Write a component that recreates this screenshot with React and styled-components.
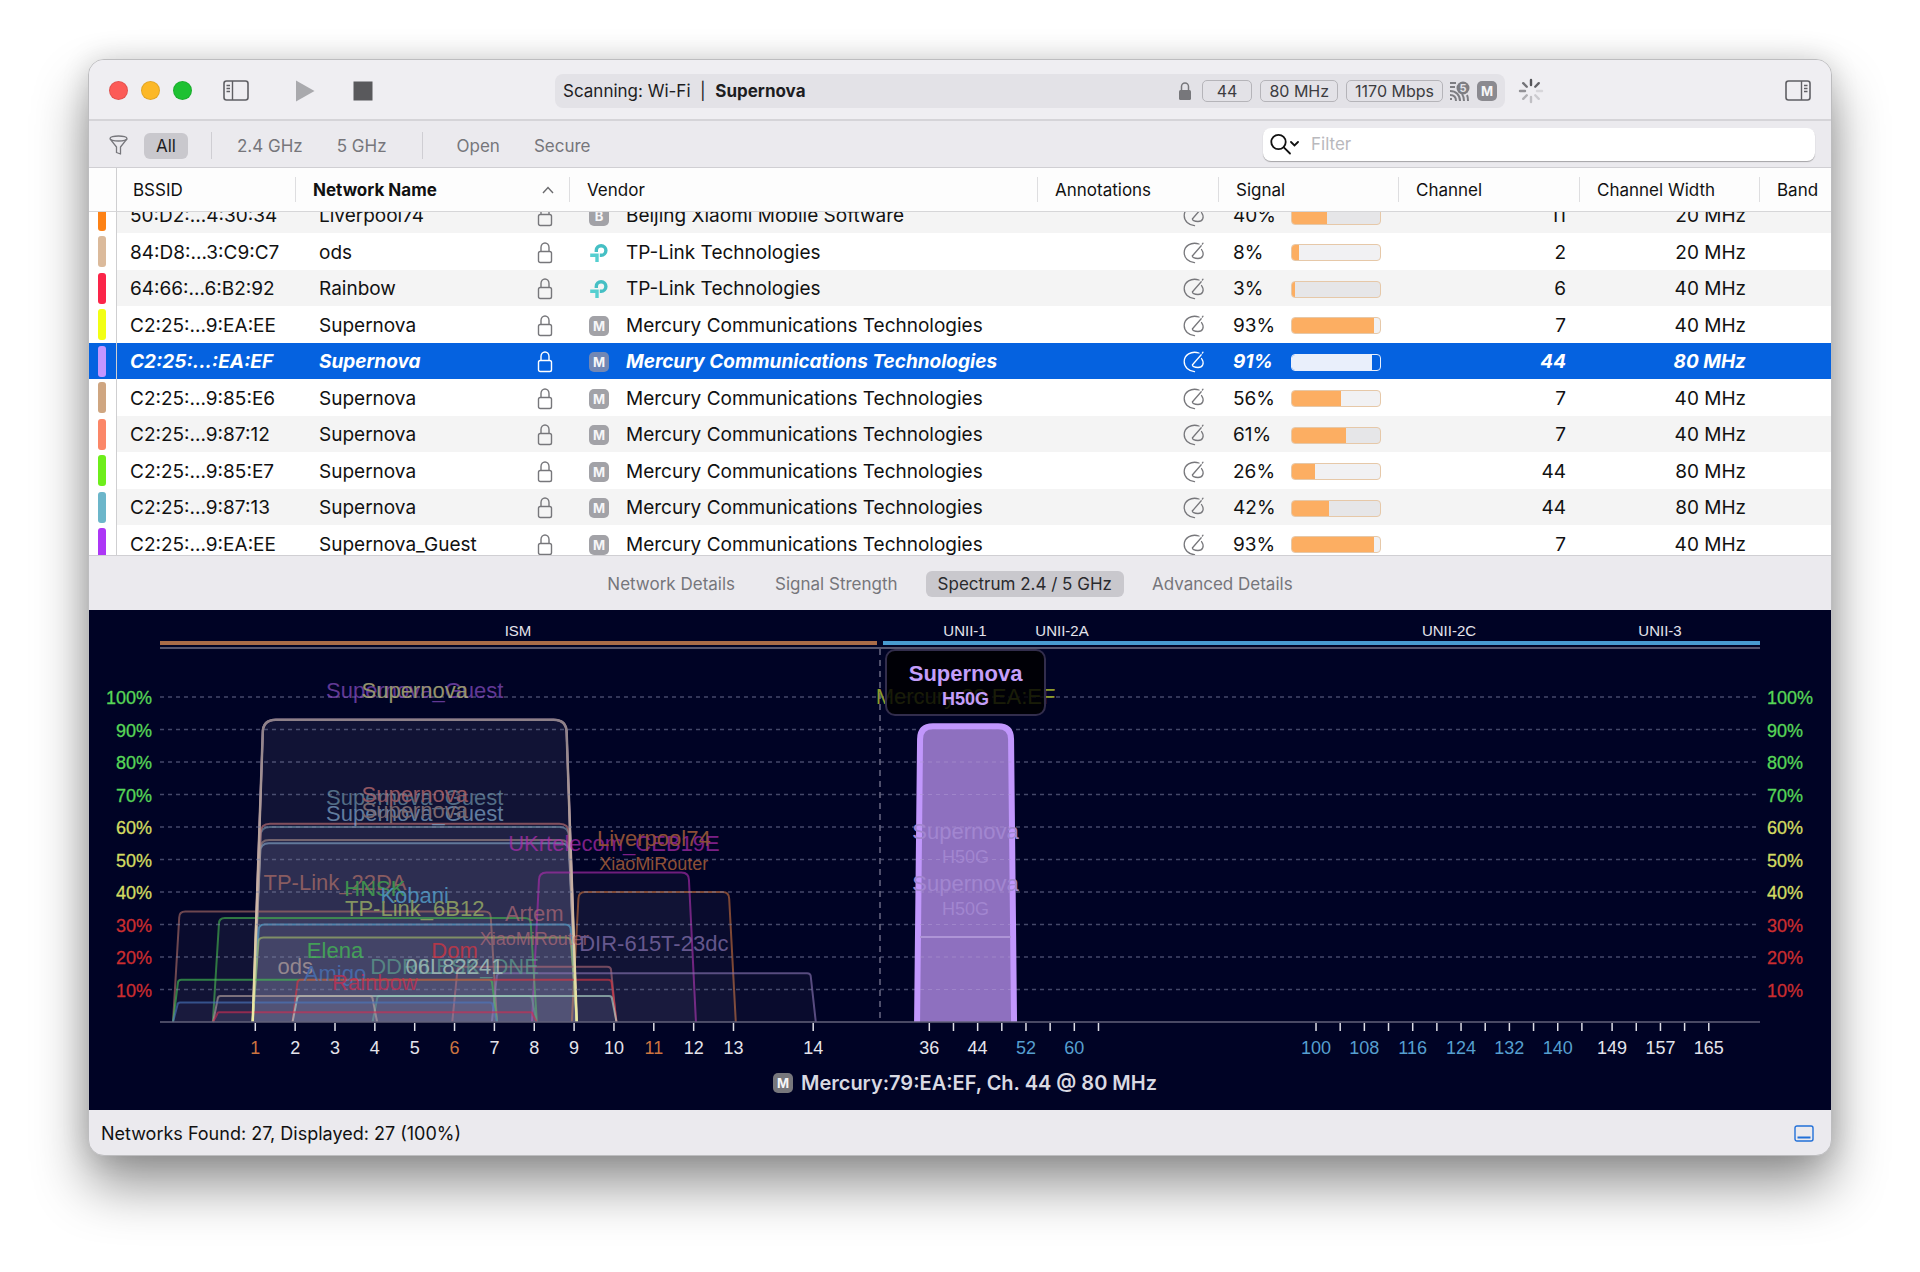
import React, { useLayoutEffect, useRef, useState } from "react";
import styled, { createGlobalStyle, css } from "styled-components";

const UI_FONT = `Inter, "Liberation Sans", sans-serif`;
const CHART_FONT = `"Liberation Sans", Arial, sans-serif`;

const NETWORKS = [
  { id: 1, color: "#fd8216", bssid: "50:D2:...4:30:34", name: "Liverpool74", vendor: "Beijing Xiaomi Mobile Software", logo: "B", signal: 40, channel: 11, width: 20 },
  { id: 2, color: "#dbba9b", bssid: "84:D8:...3:C9:C7", name: "ods", vendor: "TP-Link Technologies", logo: "tp", signal: 8, channel: 2, width: 20 },
  { id: 3, color: "#fb2549", bssid: "64:66:...6:B2:92", name: "Rainbow", vendor: "TP-Link Technologies", logo: "tp", signal: 3, channel: 6, width: 40 },
  { id: 4, color: "#f2ff14", bssid: "C2:25:...9:EA:EE", name: "Supernova", vendor: "Mercury Communications Technologies", logo: "M", signal: 93, channel: 7, width: 40 },
  { id: 5, color: "#c496ff", bssid: "C2:25:...:EA:EF", name: "Supernova", vendor: "Mercury Communications Technologies", logo: "M", signal: 91, channel: 44, width: 80 },
  { id: 6, color: "#cfa681", bssid: "C2:25:...9:85:E6", name: "Supernova", vendor: "Mercury Communications Technologies", logo: "M", signal: 56, channel: 7, width: 40 },
  { id: 7, color: "#fb8768", bssid: "C2:25:...9:87:12", name: "Supernova", vendor: "Mercury Communications Technologies", logo: "M", signal: 61, channel: 7, width: 40 },
  { id: 8, color: "#6eee1b", bssid: "C2:25:...9:85:E7", name: "Supernova", vendor: "Mercury Communications Technologies", logo: "M", signal: 26, channel: 44, width: 80 },
  { id: 9, color: "#6cb6ca", bssid: "C2:25:...9:87:13", name: "Supernova", vendor: "Mercury Communications Technologies", logo: "M", signal: 42, channel: 44, width: 80 },
  { id: 10, color: "#ad37f6", bssid: "C2:25:...9:EA:EE", name: "Supernova_Guest", vendor: "Mercury Communications Technologies", logo: "M", signal: 93, channel: 7, width: 40 },
];

// center is the middle of the occupied band, in 2.4 GHz channel numbers
const SPECTRA = [
  { name: "Supernova_Guest", center: 5, width: 40, signal: 93, color: "#8a4fc4" },
  { name: "Supernova", center: 5, width: 40, signal: 93, color: "#d2cf8a", line: "#d8c0b4" },
  { name: "Supernova_Guest", center: 5, width: 40, signal: 60, color: "#6f94a8" },
  { name: "Supernova", center: 5, width: 40, signal: 61, color: "#c87474" },
  { name: "Supernova_Guest", center: 5, width: 40, signal: 55, color: "#84a9cc" },
  { name: "Supernova", center: 5, width: 40, signal: 56, color: "#a48a86" },
  { name: "UKrtelecom_CEB19E", center: 10, width: 20, signal: 46, color: "#b02cb0" },
  { name: "Liverpool74", sub: "XiaoMiRouter", center: 11, width: 20, signal: 40, color: "#c8703c" },
  { name: "TP-Link_22DA", center: 3, width: 40, signal: 34, color: "#b07068" },
  { name: "HNSK", center: 4, width: 40, signal: 32, color: "#46b84e" },
  { name: "Kobani", center: 5, width: 40, signal: 30, color: "#5ab0dc" },
  { name: "TP-Link_6B12", center: 5, width: 40, signal: 26, color: "#a8c068" },
  { name: "Artem", sub: "XiaoMiRouter", center: 8, width: 20, signal: 17, color: "#b06a78" },
  { name: "DIR-615T-23dc", center: 11, width: 40, signal: 15, color: "#8a76b4" },
  { name: "Elena", center: 3, width: 40, signal: 13, color: "#44c452" },
  { name: "Dom", center: 6, width: 40, signal: 13, color: "#e0343f" },
  { name: "DDRILESK_DNE", center: 6, width: 20, signal: 8, color: "#5fa090" },
  { name: "06L82241", center: 6, width: 40, signal: 8, color: "#b4dccc" },
  { name: "ods", center: 2, width: 20, signal: 8, color: "#b8a4a0" },
  { name: "Amigo", center: 3, width: 40, signal: 6, color: "#4a78c0" },
  { name: "Rainbow", center: 4, width: 40, signal: 3, color: "#d02c50" },
];

const LEVELS = [100, 90, 80, 70, 60, 50, 40, 30, 20, 10];
const CHANNELS_24 = [1, 2, 3, 4, 5, 6, 7, 8, 9, 10, 11, 12, 13];
const CHANNELS_5 = [36, 40, 44, 48, 52, 56, 60, 64, 100, 104, 108, 112, 116, 120, 124, 128, 132, 136, 140, 144, 149, 153, 157, 161, 165];
const LABELS_5 = [36, 44, 52, 60, 100, 108, 116, 124, 132, 140, 149, 157, 165];

const x24 = (ch) => 166.3 + 39.85 * (ch - 1);
const x5 = (ch) => 840.3 + 6.0425 * (ch - 36);
const yOf = (signal) => 412 - 3.25 * signal;

const levelColor = (level) => {
  if (level > 60) return "#57d657";
  if (level > 30) return "#d3dc62";
  return "#cb2d30";
};

const outline = (cx, half, signal, inset = 4 + signal * 0.065) => {
  const top = yOf(signal);
  const r = 2 + signal * 0.12;
  const left = cx - half;
  const right = cx + half;
  return `M${left} 412 L${left + inset} ${top + r} Q${left + inset} ${top} ${left + inset + r} ${top} H${right - inset - r} Q${right - inset} ${top} ${right - inset} ${top + r} L${right} 412`;
};

const SidebarIcon = ({ right }) => (
  <svg width="26" height="21" viewBox="0 0 26 21" fill="none" stroke="#5f5f64" strokeWidth="1.6">
    <rect x="1" y="1" width="24" height="19" rx="2.5" />
    <path d={right ? "M16.5 1v19M19 5.5h3.5M19 8.5h3.5M19 11.5h3.5" : "M9.5 1v19M3.5 5.5H7M3.5 8.5H7M3.5 11.5H7"} strokeWidth="1.4" />
  </svg>
);

const LockIcon = () => (
  <svg width="16" height="22" viewBox="0 0 16 22" fill="none" stroke="currentColor" strokeWidth="1.4">
    <rect x="1.5" y="9.5" width="13" height="11" rx="1.8" />
    <path d="M4 9.5V5.5a4 4.5 0 0 1 8 0v4" />
  </svg>
);

const NoteIcon = () => (
  <svg width="22" height="22" viewBox="0 0 22 22" fill="none" stroke="currentColor" strokeWidth="1.3" strokeLinecap="round">
    <path d="M16 2C8-.5 1.200 4 1.200 10.600c0 5.600 4.400 9.600 10.300 10" />
    <path d="M20 1.200l-.7.900M18.200 3.800L9.500 13.800" />
    <path d="M18.500 7.500c3.200 4.600 1.400 9-3.500 9-3.600 0-6.200-1.200-5.500-2.900" />
  </svg>
);

const TpLinkLogo = () => (
  <svg width="20" height="20" viewBox="0 0 20 20" fill="none" stroke="#45bfc4" strokeWidth="3.400">
    <path d="M7.300 9V7.400a4.800 4.800 0 1 1 4.800 4.900H10.800" />
    <path d="M1.200 12.300H8V19" stroke="#55cfd0" />
  </svg>
);

const CastIcon = () => (
  <svg width="20" height="20" viewBox="0 0 20 20" fill="none" stroke="#7d7d82" strokeWidth="2">
    <path d="M0 2h6M0 6h5M0 10c6 0 10 4 10 10M0 14c4 0 6 2 6 6M0 18h2M14 20c0-3-.5-5-2-7M18 20c0-2 0-4-1-6" />
    <circle cx="13" cy="7" r="6.500" fill="#7d7d82" stroke="none" />
    <text x="13" y="11" textAnchor="middle" fontFamily="Inter, sans-serif" fontSize="11" fontWeight="700" fill="#e3e2e7" stroke="none">5</text>
  </svg>
);

const Spinner = () => (
  <svg width="26" height="26" viewBox="-13 -13 26 26" stroke="#55555a" strokeWidth="2.400" strokeLinecap="round">
    {[1, 0.9, 0.15, 0.22, 0.3, 0.4, 0.6, 0.8].map((opacity, i) => (
      <path key={i} d="M0-6V-11" opacity={opacity} transform={`rotate(${i * 45})`} />
    ))}
  </svg>
);

const VendorLogo = ({ logo }) => (logo === "tp" ? <TpLinkLogo /> : <Letter>{logo}</Letter>);

const Spectrum = () => (
  <ChartSvg viewBox="0 0 1742 450" role="img" aria-label="Spectrum 2.4 / 5 GHz">
    <g fontSize="15" fill="#e4e4ec" textAnchor="middle">
      <text x="429" y="26">ISM</text>
      <text x="876" y="26">UNII-1</text>
      <text x="973" y="26">UNII-2A</text>
      <text x="1360" y="26">UNII-2C</text>
      <text x="1571" y="26">UNII-3</text>
    </g>
    <rect x="71" y="31" width="717" height="4" fill="#a96c48" />
    <rect x="794" y="31" width="877" height="4" fill="#489bd0" />
    <rect x="71" y="37" width="1600" height="2" fill="#55556e" />

    {LEVELS.map((level) => (
      <g key={level} fontSize="18" fill={levelColor(level)} stroke={levelColor(level)} strokeWidth="0.3">
        <text x="63" y={yOf(level) + 7} textAnchor="end">{level}%</text>
        <text x="1678" y={yOf(level) + 7}>{level}%</text>
      </g>
    ))}

    <g fill="#a4a4c4" fillOpacity="0.055" strokeWidth="2">
      {SPECTRA.map((s, i) => (
        <path key={i} d={outline(x24(s.center), s.width === 40 ? 162 : 82, s.signal)} stroke={s.line || s.color} strokeOpacity="0.62" />
      ))}
    </g>
    <path d={outline(x24(5), 162, 93)} fill="none" stroke="url(#supernova)" strokeWidth="2.500" />
    <defs>
      <linearGradient id="supernova" x1="0" y1="0" x2="0" y2="1">
        <stop offset="0" stopColor="#8d8088" />
        <stop offset="0.6" stopColor="#cdb4a6" />
        <stop offset="1" stopColor="#f0efa0" />
      </linearGradient>
    </defs>

    <g stroke="#7c82a4" strokeOpacity="0.55" strokeWidth="1.500" strokeDasharray="4 4">
      {LEVELS.map((level) => (
        <path key={level} d={`M71 ${yOf(level)}H1671`} />
      ))}
    </g>
    <path d="M791 39V412" stroke="#6a6a82" strokeWidth="1.500" strokeDasharray="6 5" />

    <g textAnchor="middle" opacity="0.7">
      {SPECTRA.map((s, i) => (
        <g key={i} fill={s.color}>
          <text fontSize="22" x={x24(s.center)} y={yOf(s.signal) - (s.sub ? 46 : 22)}>{s.name}</text>
          {s.sub && <text fontSize="18" x={x24(s.center)} y={yOf(s.signal) - 22}>{s.sub}</text>}
        </g>
      ))}
    </g>

    <g textAnchor="middle" fontSize="22">
      <text x={x5(42)} y="94" fill="#8c9c2c">Mercury 38 EA:EF</text>
      <text x={x5(42)} y="229" fill="#4d5a70">Supernova</text>
      <text x={x5(42)} y="281" fill="#487238">Supernova</text>
    </g>
    <path d={outline(x5(42), 48.5, 91, 3)} fill="#9475c6" fillOpacity="0.96" stroke="#c197fc" strokeWidth="6" />
    <path d="M831 327H922" stroke="#ae94d6" strokeWidth="2" />
    <g stroke="#ad98d2" strokeOpacity="0.5" strokeDasharray="4 4">
      {LEVELS.slice(2).map((level) => (
        <path key={level} d={`M831 ${yOf(level)}H922`} />
      ))}
    </g>
    <g textAnchor="middle" fill="#a286d0">
      <text fontSize="22" x={x5(42)} y="229">Supernova</text>
      <text fontSize="18" x={x5(42)} y="253">H50G</text>
      <text fontSize="22" x={x5(42)} y="281">Supernova</text>
      <text fontSize="18" x={x5(42)} y="305">H50G</text>
    </g>

    <rect x="797" y="40" width="159" height="65" rx="9" fill="#000" fillOpacity="0.82" stroke="#322d4c" strokeWidth="2" />
    <g textAnchor="middle" fill="#c49efa" fontWeight="700">
      <text fontSize="22" x={x5(42)} y="71">Supernova</text>
      <text fontSize="18" x={x5(42)} y="95">H50G</text>
    </g>

    <path d="M71 412H1671" stroke="#62627a" strokeWidth="1.500" />
    <g stroke="#dedee6" strokeWidth="1.500">
      {[...CHANNELS_24, 14].map((ch) => (
        <path key={ch} d={`M${x24(ch === 14 ? 15 : ch)} 413v8`} />
      ))}
      {CHANNELS_5.map((ch) => (
        <path key={ch} d={`M${x5(ch)} 413v8`} />
      ))}
    </g>
    <g fontSize="18" textAnchor="middle">
      {[...CHANNELS_24, 14].map((ch) => (
        <text key={ch} x={x24(ch === 14 ? 15 : ch)} y="444" fill={[1, 6, 11].includes(ch) ? "#cc7440" : "#e4e4ec"}>{ch}</text>
      ))}
      {LABELS_5.map((ch) => (
        <text key={ch} x={x5(ch)} y="444" fill={ch > 48 && ch < 149 ? "#569fcf" : "#e4e4ec"}>{ch}</text>
      ))}
    </g>
  </ChartSvg>
);

const TABS = ["Network Details", "Signal Strength", "Spectrum 2.4 / 5 GHz", "Advanced Details"];

const App = () => {
  const [selected, setSelected] = useState(5);
  const [filter, setFilter] = useState("All");
  const [tab, setTab] = useState(TABS[2]);
  const [query, setQuery] = useState("");
  const scroller = useRef(null);

  useLayoutEffect(() => {
    scroller.current.scrollTop = 15;
  }, []);

  const filterButton = (label) => (
    <FilterButton type="button" $active={filter === label} onClick={() => setFilter(label)}>{label}</FilterButton>
  );

  return (
    <Desktop>
      <GlobalStyle />
      <Window>
        <TitleBar>
          <Controls>
            <Light aria-label="Close" $color="#fc5b57" />
            <Light aria-label="Minimize" $color="#fcb827" />
            <Light aria-label="Zoom" $color="#1dc132" />
            <SidebarButton aria-label="Toggle sidebar"><SidebarIcon /></SidebarButton>
            <PlayButton aria-label="Start">
              <svg width="20" height="22" viewBox="0 0 20 22"><path d="M1 .5L19.500 11 1 21.500z" fill="#a9a9ad" /></svg>
            </PlayButton>
            <IconButton aria-label="Stop">
              <svg width="20" height="20" viewBox="0 0 20 20"><rect x=".5" y=".5" width="19" height="19" fill="#59595c" /></svg>
            </IconButton>
          </Controls>
          <Status>
            <StatusText>Scanning: Wi-Fi&nbsp; |&nbsp; <b>Supernova</b></StatusText>
            <svg width="12" height="18" viewBox="0 0 12 18">
              <rect y="8" width="12" height="10" rx="1.500" fill="#77777b" />
              <path d="M2.500 8.500V4.500a3.500 3.500 0 0 1 7 0v4" fill="none" stroke="#77777b" strokeWidth="1.500" />
            </svg>
            <Pill $wide>44</Pill>
            <Pill>80 MHz</Pill>
            <Pill>1170 Mbps</Pill>
            <CastIcon />
            <Letter $dark>M</Letter>
          </Status>
          <SpinnerBox><Spinner /></SpinnerBox>
          <IconButton aria-label="Toggle inspector"><SidebarIcon right /></IconButton>
        </TitleBar>

        <FilterBar>
          <FunnelIcon width="19" height="20" viewBox="0 0 19 20" fill="none" stroke="#77777c" strokeWidth="1.3">
            <ellipse cx="9.500" cy="3.500" rx="8.500" ry="2.500" />
            <path d="M1 3.800L7.500 12v5.500l4 1.500v-7L18 3.800" strokeLinejoin="round" />
          </FunnelIcon>
          {filterButton("All")}
          <Divider />
          {filterButton("2.4 GHz")}
          {filterButton("5 GHz")}
          <Divider $roomy />
          {filterButton("Open")}
          {filterButton("Secure")}
          <SearchBox>
            <svg width="29" height="22" viewBox="0 0 29 22" fill="none" stroke="#111" strokeWidth="1.8" strokeLinecap="round">
              <circle cx="8.500" cy="9" r="7.200" />
              <path d="M13.800 14.300L20 20.500" />
              <path d="M21 9l3.500 3.500L28 9" />
            </svg>
            <input type="text" aria-label="Filter" placeholder="Filter" value={query} onChange={(e) => setQuery(e.target.value)} />
          </SearchBox>
        </FilterBar>

        <Scroller ref={scroller}>
          <Table>
            <colgroup>
              <col width="27" /><col width="179" /><col width="219" /><col width="55" /><col />
              <col width="181" /><col width="180" /><col width="181" /><col width="180" /><col width="72" />
            </colgroup>
            <thead>
              <tr>
                <Th aria-label="Color" />
                <Th>BSSID</Th>
                <Th $line colSpan="2" aria-sort="ascending">
                  <SortHead>
                    Network Name
                    <svg width="12" height="8" viewBox="0 0 12 8" fill="none" stroke="#6b6b6e" strokeWidth="1.4"><path d="M1 7l5-5.500L11 7" /></svg>
                  </SortHead>
                </Th>
                <Th $line>Vendor</Th>
                <Th $line>Annotations</Th>
                <Th $line>Signal</Th>
                <Th $line>Channel</Th>
                <Th $line>Channel Width</Th>
                <Th $line>Band</Th>
              </tr>
            </thead>
            <tbody>
              {NETWORKS.map((n) => (
                <Row key={n.id} $selected={n.id === selected} onClick={() => setSelected(n.id)}>
                  <MarkCell><Mark $color={n.color} /></MarkCell>
                  <Td>{n.bssid}</Td>
                  <Td $pad={24}>{n.name}</Td>
                  <Td $pad={23} $icon><LockIcon /></Td>
                  <Td $pad={20}>
                    <Inline $gap={17}>
                      <VendorLogo logo={n.logo} />
                      {n.vendor}
                    </Inline>
                  </Td>
                  <Td $icon $right={13}><NoteIcon /></Td>
                  <Td $pad={15}>
                    <Inline>
                      <Percent>{n.signal}%</Percent>
                      <Meter $selected={n.id === selected}><i style={{ width: `${n.signal}%` }} /></Meter>
                    </Inline>
                  </Td>
                  <Td $right={13}>{n.channel}</Td>
                  <Td $right={13}>{n.width} MHz</Td>
                  <Td />
                </Row>
              ))}
            </tbody>
          </Table>
        </Scroller>

        <Tabs role="tablist">
          {TABS.map((label) => (
            <Tab key={label} type="button" role="tab" aria-selected={tab === label} $active={tab === label} onClick={() => setTab(label)}>{label}</Tab>
          ))}
        </Tabs>

        <Chart>
          <Spectrum />
          <Caption><Letter $chart>M</Letter>Mercury:79:EA:EF, Ch. 44 @ 80 MHz</Caption>
        </Chart>

        <StatusBar>
          Networks Found: 27, Displayed: 27 (100%)
          <IconButton aria-label="Toggle bottom panel">
            <svg width="20" height="17" viewBox="0 0 20 17" fill="none" stroke="#2270d8" strokeWidth="1.4">
              <rect x="1" y="1" width="18" height="15" rx="2" />
              <path d="M3.500 12.500h13" strokeWidth="1.8" />
            </svg>
          </IconButton>
        </StatusBar>
      </Window>
    </Desktop>
  );
};

const GlobalStyle = createGlobalStyle`
  * {
    box-sizing: border-box;
  }

  body {
    margin: 0;
    background: #fff;
    font-family: ${UI_FONT};
    font-size: 17px;
    color: #111;
  }

  svg {
    display: block;
    flex: none;
  }

  button, input {
    font: inherit;
    color: inherit;
  }
`;

const Desktop = styled.div`
  min-height: 100vh;
  padding: 59px 88px 116px;
`;

const Window = styled.main`
  border: 1px solid #bdbdbf;
  border-radius: 16px;
  overflow: hidden;
  background: #ebeaee;
  box-shadow: 0 30px 54px rgba(0, 0, 0, 0.42), 0 0 28px rgba(0, 0, 0, 0.14);
`;

const TitleBar = styled.header`
  display: flex;
  align-items: center;
  height: 61px;
  padding: 2px 20px 0;
  background: #efeef2;
  border-bottom: 2px solid #d5d4d8;
`;

const Controls = styled.div`
  display: flex;
  align-items: center;
  width: 446px;
`;

const IconButton = styled.button`
  display: flex;
  padding: 0;
  border: 0;
  background: none;
`;

const Light = styled(IconButton)`
  width: 19px;
  height: 19px;
  margin-right: 13px;
  border-radius: 50%;
  border: 1px solid rgba(0, 0, 0, 0.1);
  background: ${(p) => p.$color};
`;

const SidebarButton = styled(IconButton)`
  margin-left: 18px;
`;

const PlayButton = styled(IconButton)`
  margin: 0 38px 0 46px;
`;

const Status = styled.div`
  flex: 1;
  display: flex;
  align-items: center;
  gap: 7px;
  height: 34px;
  padding: 0 8px;
  border-radius: 8px;
  background: #e3e2e7;
`;

const StatusText = styled.span`
  flex: 1;
  color: #1d1d1f;
`;

const Pill = styled.span`
  height: 22px;
  padding: 0 ${(p) => (p.$wide ? 14 : 6)}px;
  border: 1px solid #b5b4b9;
  border-radius: 5px;
  font-size: 16px;
  line-height: 20px;
  color: #3c3c40;
  margin-left: ${(p) => (p.$wide ? 4 : 2)}px;

  ${(p) => !p.$wide && css`
    padding: 0 8px;
    margin-left: 1px;
  `}
`;

const Letter = styled.span`
  flex: none;
  width: 20px;
  height: 20px;
  border-radius: 5px;
  background: ${(p) => (p.$dark ? "#8b8a90" : p.$chart ? "#77777c" : "#a2a2a7")};
  color: #f6f6f8;
  font-size: 13px;
  font-weight: 700;
  font-style: normal;
  line-height: 20px;
  text-align: center;
`;

const SpinnerBox = styled.div`
  width: 280px;
  padding-left: 13px;
`;

const FilterBar = styled.nav`
  display: flex;
  align-items: center;
  height: 47px;
  padding: 0 16px 0 20px;
  border-bottom: 1px solid #d0cfd3;
`;

const FunnelIcon = styled.svg`
  margin: 2px 6px 0 0;
`;

const FilterButton = styled.button`
  height: 26px;
  padding: 0 12px;
  margin: 3px 0 0 10px;
  border: 0;
  border-radius: 6px;
  background: ${(p) => (p.$active ? "#c9c8cd" : "none")};
  color: ${(p) => (p.$active ? "#1d1d1f" : "#76767b")};
`;

const Divider = styled.span`
  width: 1px;
  height: 27px;
  margin: 2px ${(p) => (p.$roomy ? 12 : 3)}px 0 23px;
  background: #cfced3;
`;

const SearchBox = styled.label`
  display: flex;
  align-items: center;
  gap: 12px;
  width: 552px;
  height: 33px;
  margin-left: auto;
  padding: 0 7px;
  border-radius: 8px;
  background: #fff;
  box-shadow: 0 1px 1px rgba(0, 0, 0, 0.3);

  input {
    flex: 1;
    padding: 0;
    border: 0;
    outline: 0;
    background: none;
  }

  input::placeholder {
    color: #b9b9bd;
  }
`;

const Scroller = styled.div`
  height: 387px;
  overflow: hidden;
  background: #fff;
`;

const Table = styled.table`
  width: 100%;
  table-layout: fixed;
  border-spacing: 0;
  white-space: nowrap;
`;

const Th = styled.th`
  position: sticky;
  top: 0;
  z-index: 1;
  height: 44px;
  padding: 1px 16px 0;
  border-bottom: 1px solid #d6d6d8;
  background: #fdfdfd;
  font-weight: ${(p) => (p["aria-sort"] ? 700 : 400)};
  text-align: left;

  &:nth-child(2) {
    border-left: 1px solid #cfcfd1;
  }

  ${(p) => p.$line && css`
    padding: 1px 0 0 18px;
    background: linear-gradient(#dedee0, #dedee0) 0 50% / 1px 25px no-repeat #fdfdfd;
  `}
`;

const SortHead = styled.div`
  display: flex;
  align-items: center;
  justify-content: space-between;
  padding-right: 15px;
`;

const Row = styled.tr`
  height: 37px;
  background: #fff;

  &:nth-child(odd) {
    height: 36px;
    background: #f4f4f4;
  }

  svg {
    color: #77777b;
  }

  ${(p) => p.$selected && css`
    && {
      background: #0562e0;
      color: #fff;
      font-weight: 700;
      font-style: italic;
    }

    && svg {
      color: #fff;
    }

    && ${Letter} {
      background: #7287b4;
    }

    && td:first-child {
      background: #0562e0;
    }
  `}
`;

const Td = styled.td`
  padding: 2px ${(p) => p.$right || 0}px 0 ${(p) => p.$pad || 0}px;
  text-align: ${(p) => (p.$right ? "right" : "left")};
  font-size: 19px;
  line-height: 22px;

  &:nth-child(2) {
    border-left: 1px solid #cfcfd1;
    padding-left: 13px;
  }

  ${(p) => p.$icon && css`
    svg {
      display: inline-block;
      vertical-align: top;
    }
  `}
`;

const MarkCell = styled.td`
  padding: 0 0 0 9px;
  background: #fff;
`;

const Mark = styled.span`
  display: block;
  width: 8px;
  height: 31px;
  border-radius: 3px;
  background: ${(p) => p.$color};
`;

const Inline = styled.div`
  display: flex;
  align-items: center;
  gap: ${(p) => p.$gap || 0}px;
`;

const Percent = styled.span`
  width: 58px;
`;

const Meter = styled.span`
  width: 90px;
  height: 17px;
  border: 1px solid ${(p) => (p.$selected ? "#e9effb" : "#e6c8a8")};
  border-radius: 4px;
  overflow: hidden;
  background: ${(p) => (p.$selected ? "none" : "rgba(60, 50, 90, 0.07)")};

  i {
    display: block;
    height: 100%;
    background: ${(p) => (p.$selected ? "#e9effb" : "#fcae62")};
  }
`;

const Tabs = styled.div`
  display: flex;
  align-items: center;
  justify-content: center;
  gap: 16px;
  height: 55px;
  padding: 2px 20px 0 0;
  border-top: 1px solid #d0cfd3;
`;

const Tab = styled.button`
  height: 26px;
  padding: 0 12px;
  border: 0;
  border-radius: 6px;
  background: ${(p) => (p.$active ? "#c9c8cd" : "none")};
  color: ${(p) => (p.$active ? "#2a2a2d" : "#76767b")};
`;

const Chart = styled.section`
  height: 500px;
  background: #000325;
  overflow: hidden;
`;

const ChartSvg = styled.svg`
  width: 100%;
  height: auto;
  font-family: ${CHART_FONT};
`;

const Caption = styled.div`
  display: flex;
  align-items: center;
  justify-content: center;
  gap: 8px;
  height: 48px;
  padding: 0 0 2px 10px;
  color: #d9d9e2;
  font-size: 20px;
  font-weight: 600;
`;

const StatusBar = styled.footer`
  display: flex;
  align-items: center;
  justify-content: space-between;
  height: 45px;
  padding: 2px 17px 0 12px;
  font-size: 18px;
`;

export default App;
